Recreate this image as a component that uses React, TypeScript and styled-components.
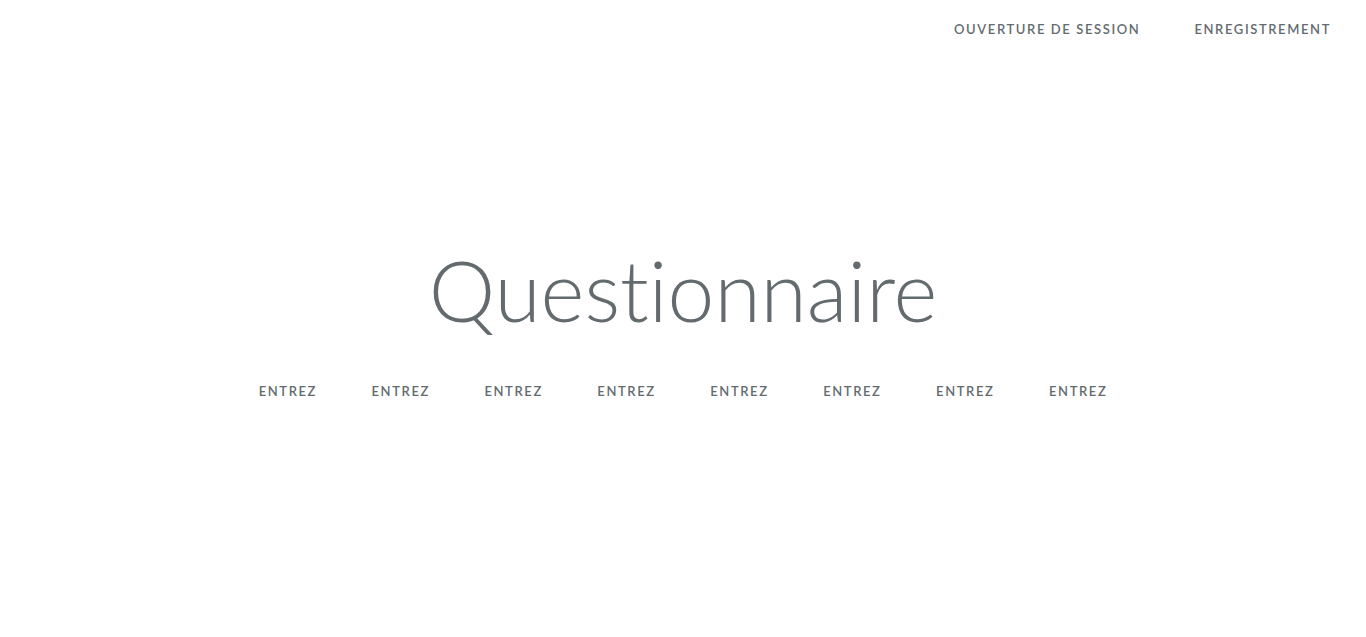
import React from "react";
import styled, { createGlobalStyle } from "styled-components";

const Global = createGlobalStyle`
  html, body {
    margin: 0;
    background: #fff;
    color: #636b6f;
    font-family: "Lato", "Open Sans", sans-serif;
    font-weight: 300;
    font-variant-ligatures: none;
  }
`;

const Page = styled.div`
  display: grid;
  height: 100vh;
  grid-template: 1fr / 1fr;
`;

const TopNav = styled.nav`
  grid-area: 1 / 1;
  align-self: start;
  justify-self: end;
  margin: 20px 10px 0 0;
  display: flex;
  gap: 4px;
`;

const Content = styled.main`
  grid-area: 1 / 1;
  align-self: center;
  justify-self: center;
  text-align: center;
`;

const Title = styled.h1`
  margin: 0 0 40px;
  font-size: 84px;
  font-weight: 300;
  line-height: 105px;
  letter-spacing: 0;
  font-variant-ligatures: none;
  font-feature-settings: "liga" 0, "dlig" 0;
`;

const Links = styled.div`
  display: flex;
  justify-content: center;
  gap: 4.5px;
`;

const Link = styled.a`
  color: #636b6f;
  padding: 0 25px;
  font-size: 13px;
  font-weight: 600;
  letter-spacing: 0.1rem;
  text-decoration: none;
  text-transform: uppercase;
  line-height: 18px;
`;

export default function App() {
  return (
    <>
      <Global />
      <Page>
        <TopNav>
          <Link href="#">Ouverture de session</Link>
          <Link href="#">Enregistrement</Link>
        </TopNav>
        <Content>
          <Title>Questionnaire</Title>
          <Links>
            {Array.from({ length: 8 }).map((_, i) => (
              <Link key={i} href="#">Entrez</Link>
            ))}
          </Links>
        </Content>
      </Page>
    </>
  );
}
